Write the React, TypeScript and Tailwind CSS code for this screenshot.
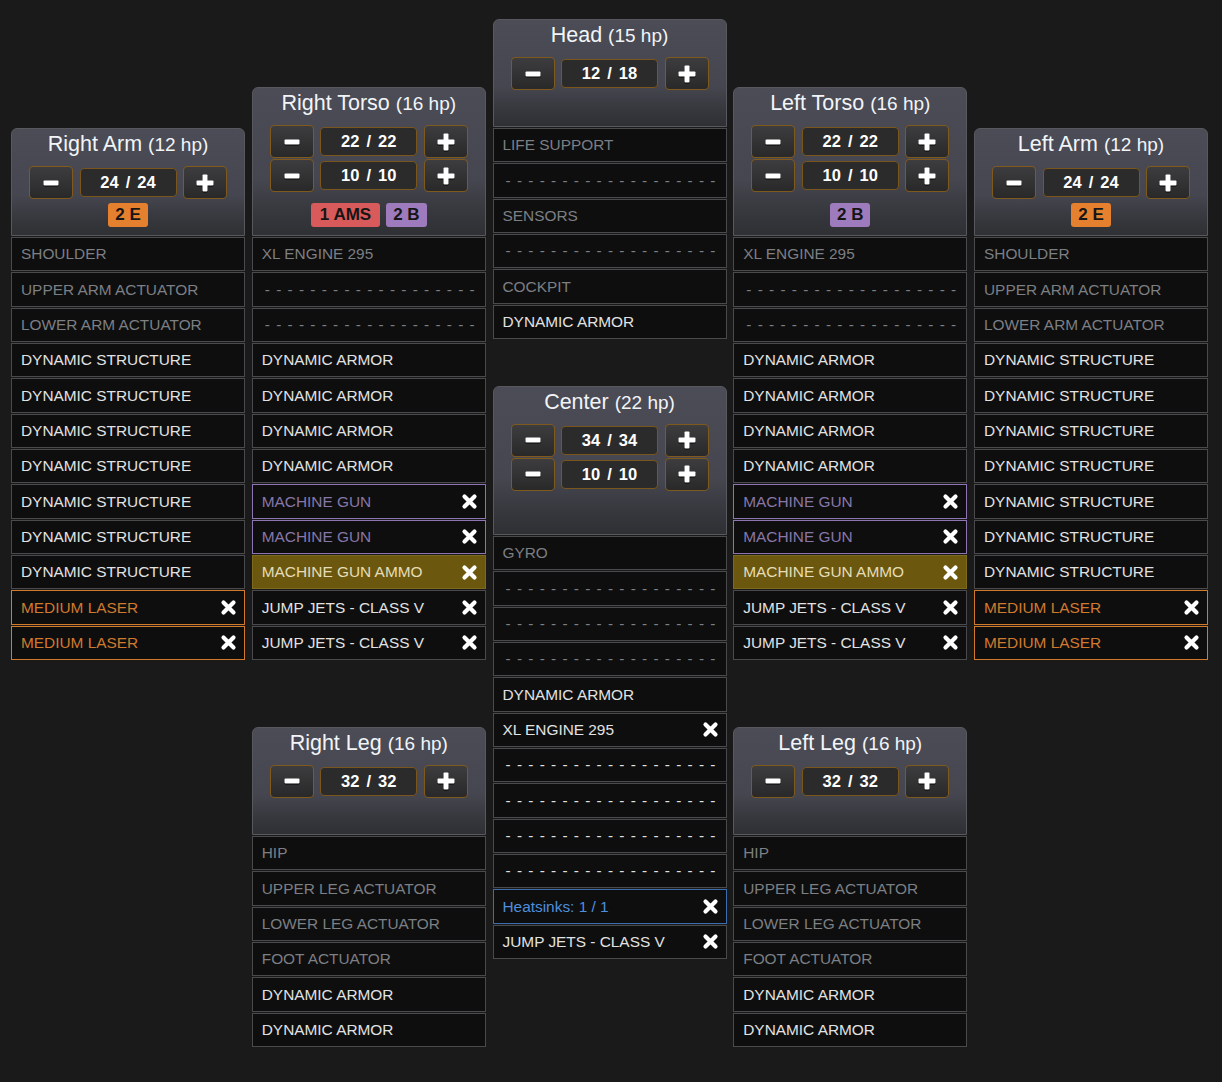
import React from "react";

type Kind = "fixed" | "user" | "mg" | "ammo" | "laser" | "heat";
type Slot = { t: string; k: Kind; x?: boolean; dash?: boolean };
type Badge = { t: string; c: "e" | "ams" | "b" };

const D = (k: Kind): Slot => ({ t: "", k, dash: true });

const kindClass: Record<Kind, string> = {
  fixed: "border-[#4a4a4c] bg-[#0e0e0e] text-[#7c7f84]",
  user: "border-[#4a4a4c] bg-[#0e0e0e] text-[#e2e2e2]",
  mg: "border-[#8e74b2] bg-[#0e0e0e] text-[#8876a8]",
  ammo: "border-[#7d6a1c] bg-[#6b580e] text-[#e6ddb8]",
  laser: "border-[#d27a2c] bg-[#0e0e0e] text-[#d07a2e]",
  heat: "border-[#3b6eae] bg-[#0e0e0e] text-[#4e8fde]",
};

const badgeClass: Record<Badge["c"], string> = {
  e: "bg-[#e5802f]",
  ams: "bg-[#d85a5a]",
  b: "bg-[#9d7bbc]",
};

function XIcon() {
  return (
    <svg width="17" height="17" viewBox="0 0 17 17" className="shrink-0">
      <path d="M3.5 3.5L13.5 13.5M13.5 3.5L3.5 13.5" stroke="#ffffff" strokeWidth="4.2" strokeLinecap="round" />
    </svg>
  );
}

function MinusIcon() {
  return (
    <svg width="16" height="6" viewBox="0 0 16 6" className="drop-shadow-[0_1px_0_rgba(0,0,0,0.9)]">
      <rect x="0.5" y="0.5" width="15" height="5" rx="1" fill="#ffffff" />
    </svg>
  );
}

function PlusIcon() {
  return (
    <svg width="18" height="18" viewBox="0 0 18 18" className="drop-shadow-[0_1px_0_rgba(0,0,0,0.9)]">
      <rect x="0.5" y="6.5" width="17" height="5" rx="1" fill="#ffffff" />
      <rect x="6.5" y="0.5" width="5" height="17" rx="1" fill="#ffffff" />
    </svg>
  );
}

function ArmorRow({ v }: { v: string }) {
  return (
    <div className="flex items-center">
      <button className="flex h-[33px] w-[44px] items-center justify-center rounded-[4px] border border-[#80591d] bg-gradient-to-b from-[#3d3d3f] to-[#29292a]">
        <MinusIcon />
      </button>
      <div className="ml-[6.5px] flex h-[29px] w-[97px] items-center justify-center rounded-[4px] border border-[#7a561c] bg-[#2b2b2c] text-[16.5px] font-bold text-white [word-spacing:2.5px]">
        {v}
      </div>
      <button className="ml-[6.5px] flex h-[33px] w-[44px] items-center justify-center rounded-[4px] border border-[#80591d] bg-gradient-to-b from-[#3d3d3f] to-[#29292a]">
        <PlusIcon />
      </button>
    </div>
  );
}

function SlotRow({ s }: { s: Slot }) {
  return (
    <div
      className={`flex h-[34.33px] items-center justify-between border pl-[9px] pr-[7px] text-[15.4px] leading-none ${kindClass[s.k]} ${
        s.k === "heat" ? "" : "uppercase"
      }`}
    >
      {s.dash ? (
        <div className="flex w-full justify-between pl-[3px] pr-[3px]">
          {Array.from({ length: 19 }).map((_, i) => (
            <span key={i}>-</span>
          ))}
        </div>
      ) : (
        <>
          <span className="whitespace-nowrap">{s.t}</span>
          {s.x && <XIcon />}
        </>
      )}
    </div>
  );
}

function Card({
  title,
  hp,
  armor,
  badges,
  slots,
}: {
  title: string;
  hp: number;
  armor: string[];
  badges?: Badge[];
  slots: Slot[];
}) {
  return (
    <div className="flex w-[234px] flex-col gap-px">
      <div
        className={`flex flex-col items-center rounded-t-[6px] border border-[#58595e] bg-[linear-gradient(to_bottom,#4b4c55_0%,#45464f_62%,#35363b_88%,#2f3034_100%)] pt-[3px] pb-[8px] ${
          armor.length > 1 ? "h-[149px]" : "h-[108px]"
        }`}
      >
        <div className="h-[24px] whitespace-nowrap text-[21.5px] leading-[24px] text-[#f2f4f8]">
          {title} <span className="text-[19px]">({hp} hp)</span>
        </div>
        <div className="mt-[10px] flex flex-col gap-px">
          {armor.map((a, i) => (
            <ArmorRow key={i} v={a} />
          ))}
        </div>
        {badges && (
          <div className="mt-auto flex gap-[6px]">
            {badges.map((b, i) => (
              <span
                key={i}
                className={`flex h-[24px] items-center rounded-[3px] px-[7px] text-[17px] font-bold text-[#151515] ${badgeClass[b.c]} ${
                  b.c === "ams" ? "px-[9px]" : "px-[7px]"
                }`}
              >
                {b.t}
              </span>
            ))}
          </div>
        )}
      </div>
      {slots.map((s, i) => (
        <SlotRow key={i} s={s} />
      ))}
    </div>
  );
}

const DS: Slot = { t: "DYNAMIC STRUCTURE", k: "user" };
const DA: Slot = { t: "DYNAMIC ARMOR", k: "user" };
const ML: Slot = { t: "MEDIUM LASER", k: "laser", x: true };
const MG: Slot = { t: "MACHINE GUN", k: "mg", x: true };
const AMMO: Slot = { t: "MACHINE GUN AMMO", k: "ammo", x: true };
const JJ: Slot = { t: "JUMP JETS - CLASS V", k: "user", x: true };

const armSlots: Slot[] = [
  { t: "SHOULDER", k: "fixed" },
  { t: "UPPER ARM ACTUATOR", k: "fixed" },
  { t: "LOWER ARM ACTUATOR", k: "fixed" },
  DS, DS, DS, DS, DS, DS, DS,
  ML, ML,
];

const torsoSlots: Slot[] = [
  { t: "XL ENGINE 295", k: "fixed" },
  D("fixed"),
  D("fixed"),
  DA, DA, DA, DA,
  MG, MG, AMMO, JJ, JJ,
];

const legSlots: Slot[] = [
  { t: "HIP", k: "fixed" },
  { t: "UPPER LEG ACTUATOR", k: "fixed" },
  { t: "LOWER LEG ACTUATOR", k: "fixed" },
  { t: "FOOT ACTUATOR", k: "fixed" },
  DA, DA,
];

const headSlots: Slot[] = [
  { t: "LIFE SUPPORT", k: "fixed" },
  D("fixed"),
  { t: "SENSORS", k: "fixed" },
  D("fixed"),
  { t: "COCKPIT", k: "fixed" },
  DA,
];

const centerSlots: Slot[] = [
  { t: "GYRO", k: "fixed" },
  D("fixed"),
  D("fixed"),
  D("fixed"),
  DA,
  { t: "XL ENGINE 295", k: "user", x: true },
  D("user"),
  D("user"),
  D("user"),
  D("user"),
  { t: "Heatsinks: 1 / 1", k: "heat", x: true },
  JJ,
];

export default function App() {
  return (
    <div className="min-h-[1082px] w-full bg-[#1a1a1a] font-['Liberation_Sans',Arial,sans-serif]">
      <div className="flex gap-[6.75px] pl-[11px] pt-[19px]">
        <div className="mt-[109px]">
          <Card title="Right Arm" hp={12} armor={["24 / 24"]} badges={[{ t: "2 E", c: "e" }]} slots={armSlots} />
        </div>
        <div className="mt-[68px] flex flex-col gap-[67px]">
          <Card
            title="Right Torso"
            hp={16}
            armor={["22 / 22", "10 / 10"]}
            badges={[
              { t: "1 AMS", c: "ams" },
              { t: "2 B", c: "b" },
            ]}
            slots={torsoSlots}
          />
          <Card title="Right Leg" hp={16} armor={["32 / 32"]} slots={legSlots} />
        </div>
        <div className="flex flex-col gap-[47px]">
          <Card title="Head" hp={15} armor={["12 / 18"]} slots={headSlots} />
          <Card title="Center" hp={22} armor={["34 / 34", "10 / 10"]} slots={centerSlots} />
        </div>
        <div className="mt-[68px] flex flex-col gap-[67px]">
          <Card
            title="Left Torso"
            hp={16}
            armor={["22 / 22", "10 / 10"]}
            badges={[{ t: "2 B", c: "b" }]}
            slots={torsoSlots}
          />
          <Card title="Left Leg" hp={16} armor={["32 / 32"]} slots={legSlots} />
        </div>
        <div className="mt-[109px]">
          <Card title="Left Arm" hp={12} armor={["24 / 24"]} badges={[{ t: "2 E", c: "e" }]} slots={armSlots} />
        </div>
      </div>
    </div>
  );
}
